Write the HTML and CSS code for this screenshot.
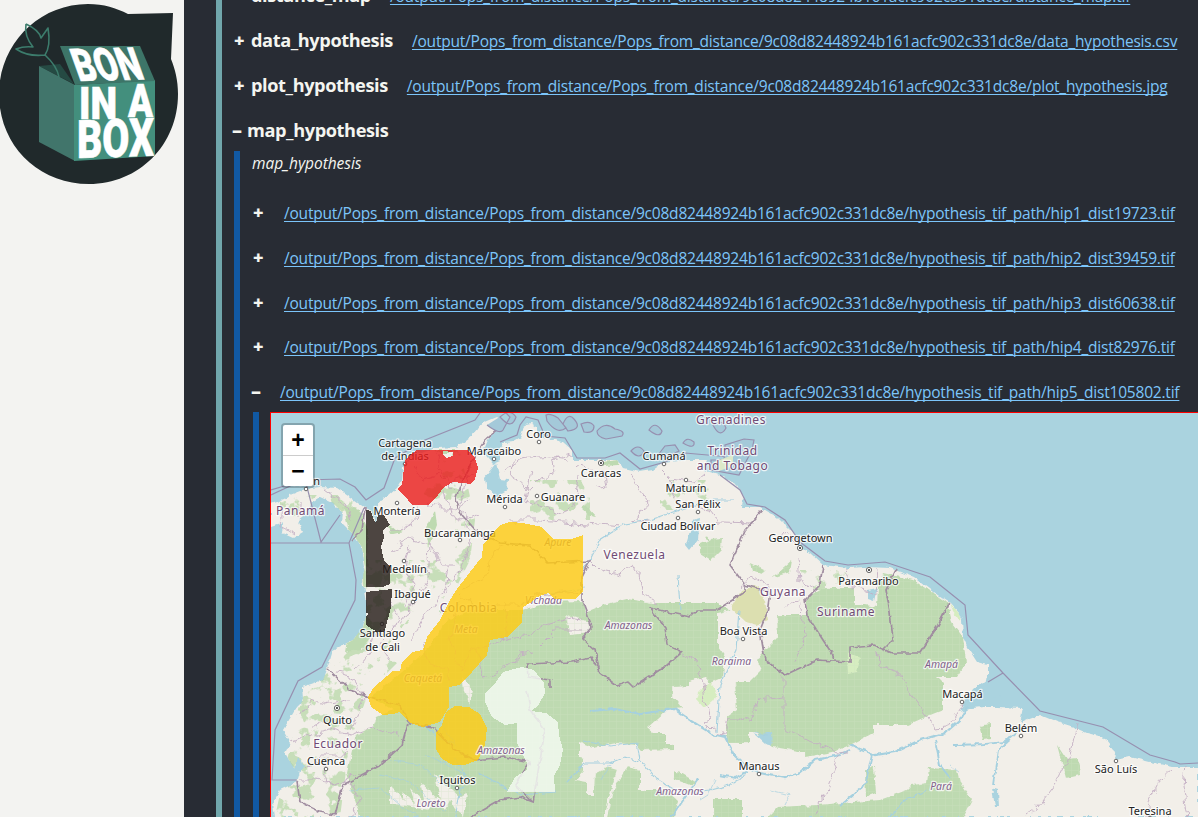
FILE: index.html
```html
<!DOCTYPE html>
<html lang="en">
<head>
<meta charset="utf-8">
<title>BON in a Box</title>
<link rel="stylesheet" href="styles.css">
</head>
<body>
<div class="app">
  <aside class="sidebar">
    <svg class="logo" viewBox="0 0 184 190" role="img" aria-label="BON in a Box">
      <path fill="#20292b" d="M88 4C104 4 116 8 128 14L173 13L171 59C175 69 178 80 178 94C178 145 139 184 89 184C38 184-1 145-1 94C-1 45 38 4 88 4Z"/>
      <path fill="#254a43" d="M39 66L60 64L74 84Z"/>
      <path fill="#41756b" d="M39 66L75 85V161L39 142Z"/>
      <path fill="#438f7d" d="M74 85L155 80V156L74 161Z"/>
      <path fill="#3d7568" d="M60 46H140L155 81L75 85Z"/>
      <path fill="none" stroke="#3c7c6c" stroke-width="1.6" stroke-linejoin="round" d="M26 24Q39 30 41 38L48 28Q51 46 45 55Q28 57 16 49Q24 46 33 47Q24 36 26 24M45 55Q57 66 59 77"/>
      <g class="logo-text">
        <text transform="matrix(1 -.02 .36 1 79 81)" textLength="67" lengthAdjust="spacingAndGlyphs" font-size="45">BON</text>
        <text transform="translate(79 118.5)" textLength="38" lengthAdjust="spacingAndGlyphs" font-size="45">IN</text>
        <text transform="translate(128 116.5)" textLength="25" lengthAdjust="spacingAndGlyphs" font-size="46">A</text>
        <text transform="matrix(1 -.03 0 1 77 158)" textLength="77" lengthAdjust="spacingAndGlyphs" font-size="53">BOX</text>
      </g>
    </svg>
  </aside>
  <main class="main">
    <section class="step">
      <div class="row"><b class="toggle">+</b><h3>distance_map</h3><a href="#">/output/Pops_from_distance/Pops_from_distance/9c08d82448924b161acfc902c331dc8e/distance_map.tif</a></div>
      <div class="row"><b class="toggle">+</b><h3>data_hypothesis</h3><a href="#">/output/Pops_from_distance/Pops_from_distance/9c08d82448924b161acfc902c331dc8e/data_hypothesis.csv</a></div>
      <div class="row"><b class="toggle">+</b><h3>plot_hypothesis</h3><a href="#">/output/Pops_from_distance/Pops_from_distance/9c08d82448924b161acfc902c331dc8e/plot_hypothesis.jpg</a></div>
      <div class="row open"><b class="toggle">–</b><h3>map_hypothesis</h3></div>
      <div class="output">
        <p class="description">map_hypothesis</p>
        <div class="row file"><b class="toggle">+</b><a href="#">/output/Pops_from_distance/Pops_from_distance/9c08d82448924b161acfc902c331dc8e/hypothesis_tif_path/hip1_dist19723.tif</a></div>
        <div class="row file"><b class="toggle">+</b><a href="#">/output/Pops_from_distance/Pops_from_distance/9c08d82448924b161acfc902c331dc8e/hypothesis_tif_path/hip2_dist39459.tif</a></div>
        <div class="row file"><b class="toggle">+</b><a href="#">/output/Pops_from_distance/Pops_from_distance/9c08d82448924b161acfc902c331dc8e/hypothesis_tif_path/hip3_dist60638.tif</a></div>
        <div class="row file"><b class="toggle">+</b><a href="#">/output/Pops_from_distance/Pops_from_distance/9c08d82448924b161acfc902c331dc8e/hypothesis_tif_path/hip4_dist82976.tif</a></div>
        <div class="row file open"><b class="toggle">–</b><a href="#">/output/Pops_from_distance/Pops_from_distance/9c08d82448924b161acfc902c331dc8e/hypothesis_tif_path/hip5_dist105802.tif</a></div>
        <div class="viewer">
          <div class="map">
            <svg class="tiles" viewBox="271 413 927 404" width="927" height="404">
              <defs>
                <filter id="rough" color-interpolation-filters="sRGB" filterUnits="userSpaceOnUse" x="260" y="400" width="950" height="430"><feTurbulence type="fractalNoise" baseFrequency=".09" numOctaves="3" seed="4"/><feDisplacementMap in="SourceGraphic" scale="11" xChannelSelector="R" yChannelSelector="G"/></filter>
                <filter id="fine" color-interpolation-filters="sRGB" filterUnits="userSpaceOnUse" x="260" y="400" width="950" height="430"><feTurbulence type="fractalNoise" baseFrequency=".16" numOctaves="2" seed="8"/><feDisplacementMap in="SourceGraphic" scale="5" xChannelSelector="R" yChannelSelector="G"/></filter>
                <filter id="speckle" color-interpolation-filters="sRGB" filterUnits="userSpaceOnUse" x="260" y="400" width="950" height="430"><feTurbulence type="fractalNoise" baseFrequency=".07" numOctaves="4" seed="11"/><feColorMatrix values="0 0 0 0 .72  0 0 0 0 .85  0 0 0 0 .66  14 0 0 0 -7.7"/><feComposite in2="SourceGraphic" operator="in"/></filter>
                <pattern id="grid" width="7" height="7" patternUnits="userSpaceOnUse"><path d="M0 .5H7M.5 0V7" stroke="#cfe3c5" stroke-width=".6" opacity=".45"/></pattern>
                <path id="land" d="M271 504L283 500L290 495L305 489L320 487L337 488L350 497L365 508L373 512L376 523L378 512L377 503L387 497L397 488L402 480L403 468L410 458L423 452L437 448L457 447L473 435L483 423L497 417L505 422L503 428L493 432L488 440L483 452L488 458L493 464L500 461L500 449L503 443L513 442L520 438L523 430L526 424L531 423L537 427L537 437L550 439L563 442L572 450L572 460L600 460L617 460L623 468L640 472L653 470L663 463L687 460L707 460L703 470L720 475L737 485L743 497L742 507L760 507L777 517L793 533L800 547L810 553L823 565L848 568L867 567L890 568L913 577L933 592L950 603L958 612L962 620L963 637L968 648L977 662L988 665V678L973 690L967 700L973 707L997 707L1023 708L1020 723L1027 720L1040 715L1057 722L1073 727L1087 733L1103 737L1113 750L1117 760L1130 757L1150 762L1173 767H1198V817H275L273 803L280 790L297 782L300 772L293 767L285 753L290 743L283 730L295 710L303 700L302 687L323 680L328 667L333 650L353 640L363 627L367 613L365 597L362 580L365 567L362 547L352 533L342 523L343 513L333 503L320 497L310 503L307 513L298 520L303 532L293 538L282 533L283 523L271 527Z"/>
                <clipPath id="landclip"><use href="#land"/></clipPath>
                <path id="forest" d="M370 697L393 680L427 650L447 620L470 610L523 610L550 602L583 601L585 613L610 603L627 599L653 603H717L730 610L718 613V647L725 657L723 677L710 683L705 677L688 681V686L673 687V697L682 708L667 710L647 728L653 733H665V744H674V749L642 750L637 745L617 743L593 747L579 742V757L583 758V771L575 780L587 782V795H594L595 773L607 767L617 770L610 793L605 810V817H360L347 773L355 737L373 727L377 717L393 710ZM735 682L737 710L727 717V743H749V732H757L773 747L805 752V757L833 752L850 745L873 733V725H907L930 715L943 710V683L937 677H957L966 663L963 637L952 623L948 603L913 580L883 573L878 587L877 607L854 603V588H823L807 597V615H777L778 637L767 648L757 660L762 670L750 682ZM767 817L777 807L817 805L880 800L907 790L912 785L927 783L929 768L957 770L960 783L972 800L963 817ZM713 799H742V817H713ZM607 817L613 790L627 767L640 770V790H667L678 800L675 817ZM673 771L681 773L697 783L690 785L674 779ZM865 770L874 767L876 793L866 797ZM1057 745L1067 760L1078 759L1080 775L1066 778ZM979 726L990 724V738L983 739ZM700 544L711 539L722 538L721 550L711 560L700 553ZM750 563L766 571L762 574L752 570ZM775 575L792 560L790 572L772 578ZM705 537L709 536L709 541Z"/>
              </defs>
              <rect x="271" y="413" width="927" height="404" fill="#aad3df"/>
              <g filter="url(#fine)"><use href="#land" fill="#f2efe9"/></g>
              <g clip-path="url(#landclip)">
                <path fill="#000" filter="url(#speckle)" d="M280 495H366V560H455V500H420L450 450L460 450L475 520L470 560L440 620L370 690L350 740L340 817H275L300 700L360 640L365 520H280ZM530 480H590V520H530ZM800 570H850V590H800ZM660 480H710V510H660Z" opacity=".75"/>
                <g filter="url(#fine)">
                  <use href="#forest" fill="#bedab1"/>
                  <path fill="#bedab1" d="M343 505L360 510L368 530L366 590L361 570L365 555L350 535ZM425 532L435 510L437 525L428 548ZM388 525L395 528L403 532L390 535ZM367 615L375 632L360 650L345 652L348 635ZM435 450H458L455 453H440ZM602 462L619 460L618 465L604 466ZM581 508L590 516L596 517L585 505Z"/>
                  <path fill="#dcdfb0" d="M741 591L757 585L765 602L768 620L757 625L746 622L731 608Z"/>
                  <path fill="#d6edc0" d="M699 692L707 684L710 682L717 692L713 700L704 708L697 700ZM847 652L861 658L857 672L848 674ZM988 695L998 697L1000 704L985 704ZM950 603L959 612L961 622L953 612Z"/>
                  <path fill="#f2efe9" d="M565 614L592 623L590 633L570 635ZM855 589H876V605H855ZM735 640L757 642L757 672L748 682L738 670ZM462 677L473 690L470 705L464 690ZM380 655L425 600L440 580L440 620L400 665ZM390 785L405 800L402 792L415 803L410 788L425 804L420 782L440 800L435 775L460 797L467 793L464 817L455 809L450 800L445 810L437 800L428 810L390 803Z"/>
                </g>
                <use href="#forest" fill="url(#grid)"/>
              </g>
              <g class="water" filter="url(#fine)">
                <path class="fill" d="M496 463L500 479L508 480L507 491L496 497L486 486L485 477ZM686 545L693 520L700 518L698 540L690 550ZM868 590L877 588L874 601L868 599ZM758 735L772 732L773 746L765 744L752 732ZM985 700L1003 695L1000 705L973 708L960 712L965 700L975 690ZM992 788L998 790L999 807L995 807ZM298 758L305 765L301 772L295 770Z"/>
                <path d="M590 711L615 709L640 714L674 709L690 720L712 734L725 737L735 756L745 765L760 773L785 778L800 773L815 760L840 755L850 750M850 745L875 755L895 752L920 740L945 733L960 720L967 707" stroke-width="2.2"/>
                <path d="M583 741L610 746L637 743L640 760L655 778L675 790L690 793L710 790L730 785L745 775M567 782L585 763L610 763L625 757L640 762M739 610L736 650L720 685L717 732M583 570L590 560L600 540L625 524L650 520L680 510L710 500L735 500M440 720L455 745L435 735L425 725M455 758L467 780L461 790L455 817M478 773L520 795L556 792M890 817L905 800L927 790M680 610L678 575" stroke-width="1.1"/>
                <path d="M872 755L865 785L840 805M935 740L940 765L950 778M955 745L985 744L1005 742L1020 728M1010 740L998 750L993 785M672 817L690 790L698 780M720 775L735 778L748 771" stroke-width="1.8"/>
                <path d="M425 755L445 763L465 775M390 760L420 765L440 783L460 790M380 775L410 782L430 800L445 812M350 790L380 788L400 805L420 817M600 780L610 765M768 735L755 732M950 765L960 772M700 800L708 795L715 780M770 790L790 795L785 805M545 595L585 588" stroke-width=".7"/>
              </g>
              <g class="admin" filter="url(#rough)">
                <path d="M415 466L423 480L440 475L455 490M440 453L438 470L450 480L475 475M420 505L415 520L400 530L390 530M430 502L440 510L455 510L470 500M445 490L450 515L460 520L480 512M470 465L460 500L465 520L480 540M390 550L410 540L430 545L440 565L455 565M410 545L405 570L415 585L405 610M430 545L428 580L415 600L400 625M390 600L400 620L380 645L390 660M450 565L445 590L425 615L410 640M470 540L465 560L450 585M500 545L490 560L485 580L460 590M505 470L520 460L550 457L570 460M513 460L512 480L530 490L540 480L555 475L553 460L570 455M530 470L525 500L545 505L557 515L575 507L578 475M575 465L605 475L607 490L595 485M630 472L640 490L648 500L640 515L632 522M510 520L540 520L575 523L620 527M660 470L670 480L695 483L705 475M668 475L672 495L680 505L710 510L720 522L755 523M590 560L600 570L620 575L632 565L638 575L642 595L655 603M777 540L785 530L800 547M798 560L800 580L815 587M850 570L848 585L865 590M878 568L876 595L865 590M650 520L630 522M740 590L750 575L770 590"/>
                <path d="M682 653L697 662L702 685L705 700L710 718L704 722L717 733L724 735L727 717L740 717L750 722L758 700L784 697V730L815 742L838 753L850 752M877 652L880 665L900 675L915 700L927 715L935 730L947 729L962 705M784 675V697M785 608L800 600L805 635L793 665M840 755L815 817M1077 724L1070 755L1055 785L1040 805L1025 817M1173 768L1160 780L1148 805L1148 817M1185 765L1183 785L1188 817M460 595L475 605L520 605L540 595L582 590M460 600L450 640L460 670L475 650L510 638M425 640L430 665L448 670L450 680M505 600L506 637M478 650L485 678L500 672L520 655L535 652M500 640L530 635L545 625L570 618L583 620M540 645L555 630L582 630"/>
                <path d="M300 715L310 700L325 705L350 700M290 740L310 735L330 730L350 735L372 727L400 735M305 770L320 755L345 755L350 740M325 760L328 785L345 782L355 775M300 780L315 780L335 785M350 780L360 800L350 817M335 672L350 675L365 700L355 720L350 730M310 730L325 720L345 725L350 715M375 630L368 655L355 670M282 505L280 525L295 535M300 500V515M325 490L345 505L350 520"/>
              </g>
              <g class="border" filter="url(#fine)">
                <path d="M505 422L485 440L470 465L460 487L455 500L462 515L480 535L500 543L530 545L547 563L590 561L582 577V600L592 627L582 638L595 650L600 673L617 686L628 682L633 687L665 667L682 652L667 645L665 627L650 608L690 617L697 610L717 610L745 592V585L730 565L745 530L763 510M745 585L770 592L767 613L760 630L765 660L785 675L817 660L850 662V647L873 645L892 653L920 653L937 627L949 603M823 565L820 585L805 600L807 615L823 640L835 658M897 568L886 590L890 612L893 640L883 650M600 673L592 658L572 662L527 664L528 677L550 680V688M527 690L530 710L545 730L533 802L520 797L500 800L470 817M328 669L350 690L370 697L400 705L410 723L433 727L455 750L475 760L505 757L530 762L515 785L533 802M408 723L402 745L380 765L343 785L335 815L320 812L300 802L297 782M365 508L362 530L352 540"/>
              </g>
              <g class="sea-border">
                <path d="M271 490L305 480L340 479L355 487L366 500L384 488L395 458L425 440L475 420L480 413M271 543H349L364 508M349 543L356 580L355 600L322 667L298 681L275 730L272 780H297M271 495L305 479L321 542L340 515M500 442L517 435L520 425L526 417L538 420L545 436L565 438L577 458L605 458L620 453L640 469L665 462L685 453L730 457M720 475L740 490L747 504L765 507L785 520L800 542L825 561L848 565L885 562L930 577L950 593L965 605L968 635L1003 673L1040 711L1103 727L1150 755L1175 762L1180 764L1198 763M988 682L1003 673"/>
                <path class="islands" d="M487 425Q500 435 503 430L510 417L506 413M546 415Q550 413 558 418L566 428Q557 435 547 421ZM563 424Q568 412 574 419Q583 429 568 431ZM581 424Q590 420 594 426Q594 434 584 432ZM597 431Q605 421 615 429Q626 431 622 436L606 439Q597 437 597 431ZM649 430Q655 420 662 431Q660 439 649 430ZM631 451Q638 443 644 451Q640 461 631 451ZM683 443Q687 436 694 442Q695 450 683 443ZM658 455L665 446L675 445L679 451L667 457ZM713 425Q722 418 726 428Q720 439 713 425ZM711 460L724 460L725 445L744 439L754 440L752 450L739 475L711 470ZM500 417Q510 408 516 417Q512 429 503 420Z"/>
                <path class="trinidad" d="M714 462L733 455L733 466L719 471Z"/>
              </g>
              <g class="labels city">
                <text x="405" y="447">Cartagena</text><text x="405" y="460">de Indias</text><text x="397" y="515">Montería</text><text x="494" y="455">Maracaibo</text><text x="538.5" y="438">Coro</text><text x="601" y="477">Caracas</text><text x="664" y="460">Cumaná</text><text x="686" y="492">Maturín</text><text x="698" y="508">San Félix</text><text x="678" y="530">Ciudad Bolívar</text><text x="504.5" y="503">Mérida</text><text x="563" y="501">Guanare</text><text x="460" y="537">Bucaramanga</text><text x="404.5" y="573">Medellín</text><text x="412.5" y="598">Ibagué</text><text x="382.5" y="637">Santiago</text><text x="382.5" y="651">de Cali</text><text x="337.5" y="724">Quito</text><text x="326" y="765">Cuenca</text><text x="457.5" y="784">Iquitos</text><text x="800.5" y="542">Georgetown</text><text x="868.5" y="585">Paramaribo</text><text x="743.5" y="635">Boa Vista</text><text x="759" y="770">Manaus</text><text x="962.5" y="698">Macapá</text><text x="1021" y="732">Belém</text><text x="1116" y="773">São Luís</text><text x="1150" y="815">Teresina</text><text x="305" y="485">Colón</text>
              </g>
              <g class="labels country">
                <text x="300.5" y="515">Panamá</text><text x="634.5" y="559">Venezuela</text><text x="783" y="596">Guyana</text><text x="846" y="616">Suriname</text><text x="731" y="424">Grenadines</text><text x="732.5" y="454.5">Trinidad</text><text x="732.5" y="469.5">and Tobago</text><text x="338" y="748">Ecuador</text><text x="468.5" y="612">Colombia</text>
              </g>
              <g class="labels region">
                <text x="558" y="546">Apure</text><text x="543.5" y="604">Vichada</text><text x="466" y="633">Meta</text><text x="423" y="682">Caquetá</text><text x="628.5" y="629">Amazonas</text><text x="731.5" y="665">Roraima</text><text x="680" y="795">Amazonas</text><text x="431" y="807">Loreto</text><text x="941.5" y="668">Amapá</text><text x="941" y="790">Pará</text>
              </g>
              <g class="dots">
                <circle cx="539" cy="442" r="1.8"/><circle cx="664" cy="464" r="1.8"/><circle cx="686" cy="480" r="1.8"/><circle cx="698" cy="512" r="1.8"/><circle cx="678" cy="518" r="1.8"/><circle cx="505" cy="507" r="1.8"/><circle cx="537" cy="496" r="1.8"/><circle cx="460" cy="540" r="1.8"/><circle cx="404" cy="561" r="1.8"/><circle cx="397" cy="503" r="1.8"/><circle cx="405" cy="464" r="1.8"/><circle cx="494" cy="459" r="1.8"/><circle cx="306" cy="489" r="1.8"/><circle cx="413" cy="602" r="1.8"/><circle cx="382" cy="624" r="1.8"/><circle cx="326" cy="769" r="1.8"/><circle cx="457" cy="788" r="1.8"/><circle cx="743" cy="639" r="1.8"/><circle cx="759" cy="774" r="1.8"/><circle cx="962" cy="702" r="1.8"/><circle cx="1021" cy="736" r="1.8"/><circle cx="1116" cy="761" r="1.8"/><circle cx="1150" cy="818" r="1.8"/>
                <circle cx="601" cy="463" r="2.6"/><circle cx="337" cy="708" r="2.6"/><circle cx="800" cy="548" r="2.6"/><circle cx="869" cy="570" r="2.6"/>
                <path d="M600 463h2M336 708h2M799 548h2M868 570h2" stroke-width="2"/>
              </g>
              <g class="overlay">
                <path fill="#eb1c1c" fill-rule="evenodd" d="M409 456L417 450H467L475 458L478 468L475 479L471 484L453 482L443 488L436 498L428 505H412L408 500L397 489L402 485L404 468L405 460ZM443 451L453 452V456L446 458L443 454Z"/>
                <path fill="#241b18" d="M366 510L371 511L374 520L376 523L378 515L384 515L390 525L383 530L384 538L381 547L384 560L390 567V584L383 587H366ZM366 592L392 589L391 607L385 630L384 632H377L366 625V616L369 614L366 613Z"/>
                <path fill="#ffcc12" d="M510 522L500 525L483 545L482 557L477 563L457 589L450 600L440 620L427 637L423 650L412 652L402 662L400 671L393 671L374 687L368 697L371 707L383 715L393 714L400 712L410 723L423 727L440 722L449 707V687L460 685L472 672L487 655L490 640L507 637L522 622L523 607L530 603L535 598L548 593L555 599H575L583 592V535L572 539H553L542 527L523 523ZM455 706L469 707L480 714L487 728L485 745L478 760L465 765H453L442 759L436 749V733L442 725L446 712Z"/>
                <path fill="#f7fcf5" d="M522 667L534 670L544 683L545 693L538 706L531 711L546 713L558 722L559 735L563 750L560 765L554 776L555 792H507L515 777L527 770V763L517 743V723L505 725L492 717L485 702V693L496 682L503 672Z"/>
              </g>
              <g class="labels region"><text x="501" y="754">Amazonas</text></g>
            </svg>
            <div class="zoom-control"><span>+</span><span>−</span></div>
          </div>
        </div>
      </div>
    </section>
  </main>
</div>
</body>
</html>
```
FILE: styles.css
```css
* { box-sizing: border-box; }
body { margin: 0; font: 16px/24px "Open Sans", "Noto Sans", sans-serif; color: #f4f5f0; background: #282c34; }
.app { display: flex; width: 1198px; height: 817px; overflow: hidden; }
.sidebar { flex: 0 0 184px; background: #f3f3f1; }
.logo { display: block; width: 184px; height: 190px; }
.logo-text { fill: #fff; stroke: #fff; stroke-width: .6px; font-family: Roboto, sans-serif; font-weight: 900; }
.main { flex: 1; min-width: 0; padding-left: 32px; background: #282c34; }
.step { height: 843px; margin-top: -26px; border-left: 6px solid #71a7ac; padding-left: 12px; }
.row { display: flex; align-items: center; height: 44.8px; white-space: nowrap; }
.row.open { height: 43.6px; margin-left: -2px; }
.row h3 { margin: -2px 19px 0 0; font-size: 18.2px; font-weight: 700; letter-spacing: -.41px; }
.row a { color: #7cc5fa; font-size: 15.5px; letter-spacing: -.205px; text-decoration: underline; text-underline-offset: 2px; text-decoration-skip-ink: none; }
.toggle { flex: 0 0 17px; margin-top: -2px; font-size: 18px; font-weight: 800; }
.open > .toggle { flex-basis: 15px; font-size: 20px; margin-top: 0; }
.row.open h3 { margin-top: 0; }
.output { height: 666px; border-left: 6px solid #1159a3; padding-left: 13px; }
.description { margin: -1px 0 0 -1px; height: 40px; font-style: italic; font-size: 15.5px; letter-spacing: -.05px; }
.row.file { height: 44.7px; }
.row.file .toggle { flex-basis: 31px; }
.row.file.open { height: 42.2px; }
.row.file.open .toggle { flex-basis: 29px; }
.row.file.open a { position: relative; top: 1px; }
.viewer { height: 406px; border-left: 6px solid #1159a3; padding-left: 11px; }
.map { position: relative; width: 930px; height: 410px; border: 1px solid #f00; overflow: hidden; background: #aad3df; }
.tiles { display: block; }
.zoom-control { position: absolute; left: 10px; top: 10px; width: 34px; height: 65px; display: flex; flex-direction: column; border: 2px solid rgba(0,0,0,.22); border-radius: 4px; background: #fff; background-clip: padding-box; color: #000; }
.zoom-control span { height: 30px; font: 700 23px/30px "Liberation Sans", sans-serif; text-align: center; }
.zoom-control span:first-child { height: 31px; border-bottom: 1px solid #ccc; }
.water { fill: none; stroke: #a5d0df; }
.water .fill { fill: #aad3df; stroke: none; }
.admin { fill: none; stroke: #c3aec3; stroke-width: .9; }
.border { fill: none; stroke: #a08da0; stroke-width: 1.7; stroke-linejoin: round; }
.sea-border { fill: none; stroke: #9790b0; stroke-width: 1.2; }
.sea-border .islands { fill: #a4c9d9; }
.sea-border .trinidad { fill: #dce8c8; stroke: none; }
.labels { text-anchor: middle; font-family: "Noto Sans", sans-serif; font-size: 11px; paint-order: stroke; stroke: rgba(255,255,255,.75); stroke-width: 2.4px; stroke-linejoin: round; }
.city { fill: #222; }
.country { fill: #704b75; font-size: 12px; letter-spacing: .5px; }
.region { fill: #82628b; font-style: italic; font-size: 10.4px; }
.dots { fill: #fff; stroke: #555; stroke-width: .9; }
.overlay { opacity: .8; shape-rendering: crispEdges; }
```
